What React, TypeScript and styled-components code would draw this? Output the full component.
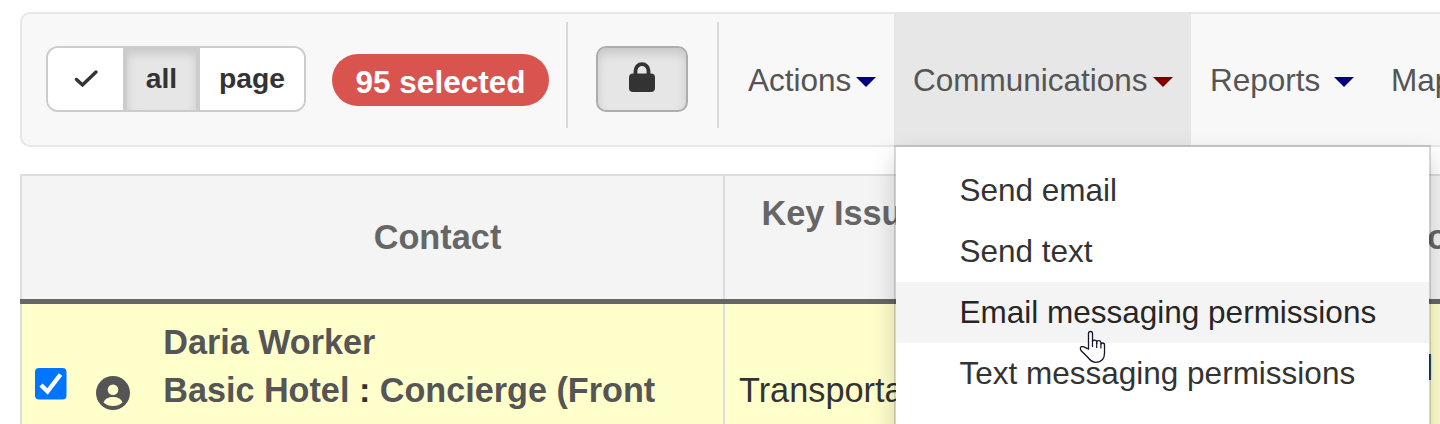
import React from "react";
import styled, { createGlobalStyle } from "styled-components";

const Global = createGlobalStyle`
  * { box-sizing: border-box; }
  html, body { margin: 0; }
  body {
    width: 1440px;
    height: 424px;
    overflow: hidden;
    background: #fff;
    color: #333;
    font-family: "Liberation Sans", Arial, sans-serif;
  }
`;

const Page = styled.main`
  width: 1440px;
  height: 424px;
  padding: 12px 0 0 20px;
  overflow: hidden;
`;

const Navbar = styled.nav`
  display: flex;
  align-items: stretch;
  width: 1600px;
  height: 135px;
  border: 2px solid #e7e7e7;
  border-radius: 10px;
  background: #f8f8f8;
`;

const ButtonGroup = styled.div`
  display: flex;
  width: 260px;
  height: 66px;
  margin: 32px 0 0 24px;
  border: 2px solid #ccc;
  border-radius: 12px;
  background: #fff;
  overflow: hidden;
`;

const GroupButton = styled.button<{ $width: number; $active?: boolean }>`
  display: flex;
  align-items: center;
  justify-content: center;
  width: ${(p) => p.$width}px;
  padding: 0 0 2px;
  border: solid #ccc;
  border-width: ${(p) => (p.$active ? "0 4px" : "0")};
  background: ${(p) => (p.$active ? "#e6e6e6" : "#fff")};
  box-shadow: ${(p) => (p.$active ? "inset 0 6px 10px rgba(0,0,0,.125)" : "none")};
  color: #333;
  font: bold 28.3px/60px "Liberation Sans", Arial, sans-serif;
`;

const Badge = styled.span`
  width: 217px;
  height: 52px;
  margin: 40px 0 0 26px;
  border-radius: 26px;
  background: #d9534f;
  color: #fff;
  font-size: 31.5px;
  font-weight: bold;
  line-height: 56px;
  text-align: center;
`;

const Divider = styled.span<{ $gap: number }>`
  width: 2px;
  height: 106px;
  margin: 8px 0 0 ${(p) => p.$gap}px;
  background: #d9d9d9;
`;

const LockButton = styled.button`
  display: flex;
  justify-content: center;
  width: 92px;
  height: 66px;
  margin: 32px 0 0 28px;
  padding: 14px 0 0;
  border: 2px solid #adadad;
  border-radius: 10px;
  background: #e6e6e6;
  box-shadow: inset 0 6px 10px rgba(0, 0, 0, 0.125);
`;

const NavItems = styled.div`
  display: flex;
  margin: -2px 0 -2px 11px;
`;

const NavItem = styled.a<{ $width: number; $open?: boolean; $gap?: number }>`
  position: relative;
  display: flex;
  align-items: flex-start;
  width: ${(p) => p.$width}px;
  padding: 50px 0 0 ${(p) => (p.$gap === 5 && !p.$open ? 18 : 19)}px;
  background: ${(p) => (p.$open ? "#e7e7e7" : "transparent")};
  color: #555;
  font-size: 31.5px;
  line-height: 37px;
  white-space: nowrap;

  &::after {
    content: ${(p) => (p.$gap === undefined ? "none" : '""')};
    margin: 15px 0 0 ${(p) => p.$gap ?? 0}px;
    border: 10px solid transparent;
    border-bottom: 0;
    border-top-color: ${(p) => (p.$open ? "#800000" : "#000080")};
  }
`;

const Menu = styled.ul`
  position: absolute;
  z-index: 2;
  top: 133px;
  left: 0;
  width: 537px;
  height: 330px;
  margin: 0;
  padding: 13px 0;
  list-style: none;
  border: 2px solid rgba(0, 0, 0, 0.15);
  background: #fff;
  background-clip: padding-box;
  box-shadow: 0 12px 24px rgba(0, 0, 0, 0.175);
`;

const MenuItem = styled.li<{ $hover?: boolean }>`
  height: 61px;
  padding-left: 63.5px;
  background: ${(p) => (p.$hover ? "#f4f4f4" : "transparent")};
  color: ${(p) => (p.$hover ? "#262626" : "#333")};
  font-size: 31.5px;
  line-height: 61px;
`;

const Pointer = styled.svg`
  position: absolute;
  left: 183px;
  top: 182px;
`;

const Table = styled.section`
  display: grid;
  grid-template-columns: 703px 691px 300px;
  width: 1697px;
  margin-top: 27px;
  border: 2px solid #ddd;
  border-width: 2px 0 0 0;
`;

const HeadCell = styled.div`
  height: 123px;
  border-left: 2px solid #ddd;
  background: #f4f4f4;
  color: #666;
  font-size: 34.3px;
  font-weight: bold;
  line-height: 48px;
`;

const HeadRule = styled.div`
  grid-column: 1 / -1;
  height: 5px;
  background: #666;
`;

const ContactHead = styled(HeadCell)`
  padding: 37px 0 0 130px;
  text-align: center;
`;

const IssuesHead = styled(HeadCell)`
  padding: 13px 0 0 36.5px;
`;

const LastHead = styled(HeadCell)`
  padding: 37px 0 0 11px;
`;

const Cell = styled.div`
  height: 130px;
  border-left: 2px solid #ddd;
  background: #ffffcc;
  font-size: 34.3px;
  line-height: 48px;
`;

const ContactCell = styled(Cell)`
  display: flex;
`;

const Check = styled.svg`
  margin: 64px 0 0 13px;
`;

const Person = styled.svg`
  margin: 72px 0 0 28.5px;
`;

const ContactName = styled.div`
  margin: 14px 0 0 33.7px;
  color: #555;
  font-size: 34.2px;
  font-weight: bold;
  white-space: nowrap;
`;

const Colon = styled.span`
  color: #333;
`;

const TextCell = styled(Cell)<{ $indent: number; $top: number }>`
  padding: ${(p) => p.$top}px 0 0 ${(p) => p.$indent}px;
`;

export default function App() {
  return (
    <Page>
      <Global />
      <Navbar>
        <ButtonGroup>
          <GroupButton $width={75} aria-label="Toggle">
            <svg width="26" height="20" viewBox="0 0 26 20">
              <path d="M3.500 11.500 9.500 17 23 4" fill="none" stroke="#333" strokeWidth="3.400" strokeLinecap="round" />
            </svg>
          </GroupButton>
          <GroupButton $width={77} $active>all</GroupButton>
          <GroupButton $width={104}>page</GroupButton>
        </ButtonGroup>
        <Badge>95 selected</Badge>
        <Divider $gap={17} />
        <LockButton aria-label="Lock">
          <svg width="28" height="32" viewBox="0 0 28 32">
            <path d="M7.500 13V8.700a6.500 6.500 0 0 1 13 0V13" fill="none" stroke="#333" strokeWidth="3.800" />
            <rect x="1" y="11.500" width="26" height="18.500" rx="4" fill="#333" />
          </svg>
        </LockButton>
        <Divider $gap={29} />
        <NavItems>
          <NavItem $width={164} $gap={5}>Actions</NavItem>
          <NavItem $width={297} $gap={5} $open>
            Communications
            <Menu>
              <MenuItem>Send email</MenuItem>
              <MenuItem>Send text</MenuItem>
              <MenuItem $hover>Email messaging permissions</MenuItem>
              <MenuItem>Text messaging permissions</MenuItem>
              <Pointer width="28" height="36" viewBox="0 0 28 36">
                <path
                  d="M9.500 20V4.500q0-2 2-2t2 2V13q0-1.800 2-1.800t2.200 1.800v2-1.500q0-1.800 2-1.800t2.200 1.800v2q0-1.500 1.800-1.500t1.800 2V24q0 9.300-8.500 9.300-4.500 0-8.500-5.300L2 21.500q-1.500-3 .5-3.800 2-.6 4 1z"
                  fill="#fff"
                  stroke="#151529"
                  strokeWidth="1.300"
                />
                <path d="M13.500 12.500V18M17.700 13.500V19M21.900 14.500V19.500" fill="none" stroke="#151529" strokeWidth="1.200" />
              </Pointer>
            </Menu>
          </NavItem>
          <NavItem $width={181} $gap={14}>Reports</NavItem>
          <NavItem $width={140}>Maps</NavItem>
        </NavItems>
      </Navbar>
      <Table>
        <ContactHead>Contact</ContactHead>
        <IssuesHead>Key Issues</IssuesHead>
        <LastHead>o</LastHead>
        <HeadRule />
        <ContactCell>
          <Check width="32" height="32" viewBox="0 0 32 32">
            <rect width="31.500" height="31.500" rx="4" fill="#0075ff" />
            <path d="m6 17 6.500 6.500L25.500 6.500" fill="none" stroke="#fff" strokeWidth="4.400" />
          </Check>
          <Person width="34" height="34" viewBox="0 0 34 34">
            <circle cx="17" cy="17" r="17" fill="#555" />
            <circle cx="17" cy="13.800" r="5.300" fill="#ffffcc" />
            <path d="M7.500 26.500Q9.500 21 17 21t9.500 5.500Q22.500 30 17 30t-9.500-3.500z" fill="#ffffcc" />
          </Person>
          <ContactName>
            Daria Worker
            <br />
            Basic Hotel <Colon>:</Colon> Concierge (Front
          </ContactName>
        </ContactCell>
        <TextCell $indent={14} $top={62}>Transportation</TextCell>
        <TextCell $indent={9.5} $top={40}>l</TextCell>
      </Table>
    </Page>
  );
}
